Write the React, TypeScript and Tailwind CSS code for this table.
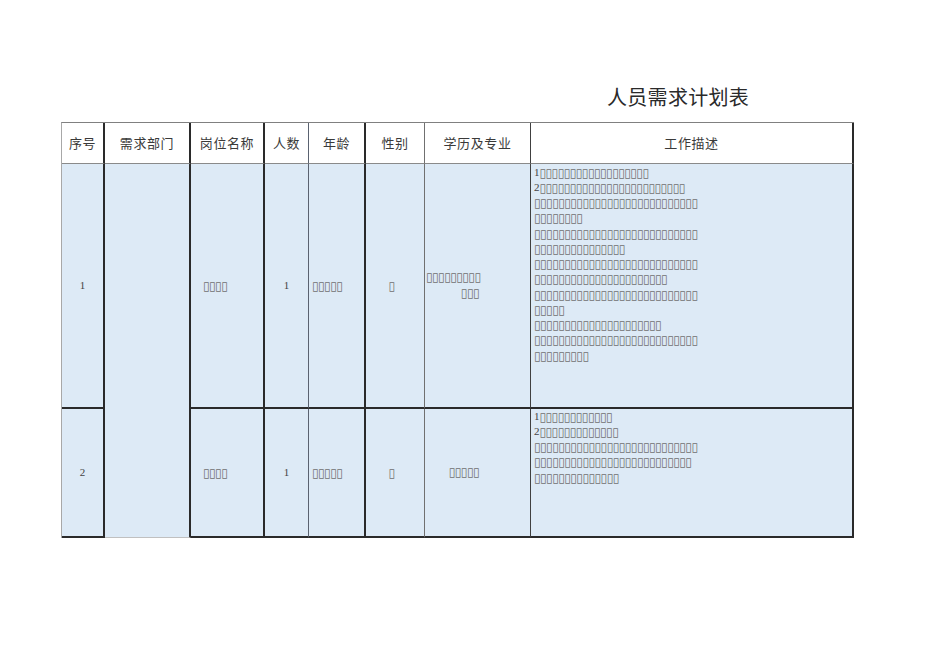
import React from "react";

const B = (n: number) => "▯".repeat(n);

const T = "font-['DejaVu_Sans',sans-serif] text-[12px] tracking-[-0.55px] text-[#707070]";
const NUM = "font-['Liberation_Serif',serif] text-[11px] text-[#444]";

function Lines({ lines }: { lines: [string, number][] }) {
  return (
    <div className="text-[11px] whitespace-pre">
      {lines.map(([p, n], i) => (
        <div key={i} className="h-[15.25px] leading-[15.25px] flex items-center">
          {p && <span className={`${NUM} leading-none`}>{p}</span>}
          <span className={`${T} leading-none`}>{B(n)}</span>
        </div>
      ))}
    </div>
  );
}

const BLACK = "border-r-2 border-r-[#2a2a2a]";
const colBorder = [
  BLACK,
  BLACK,
  BLACK,
  "border-r border-r-[#5a6270]",
  BLACK,
  "border-r border-r-[#707070]",
  "border-r border-r-[#404040]",
  BLACK,
];
const headers = ["序号", "需求部门", "岗位名称", "人数", "年龄", "性别", "学历及专业", "工作描述"];
const CELL = "bg-[#ddeaf6] border-b-2 border-b-[#2a2a2a]";

function Cells({ edu, desc, shift }: { edu: number[]; desc: [string, number][]; shift: string }) {
  return (
    <>
      <div className={`${CELL} ${colBorder[2]} flex items-center pl-[12px] text-[11px]`}>
        <span className={`${T} leading-none`}>{B(4)}</span>
      </div>
      <div className={`${CELL} ${colBorder[3]} flex items-center justify-center ${NUM}`}>1</div>
      <div className={`${CELL} ${colBorder[4]} flex items-center pl-[3px] text-[11px]`}>
        <span className={`${T} leading-none`}>{B(5)}</span>
      </div>
      <div className={`${CELL} ${colBorder[5]} flex items-center justify-center pr-[7px] text-[11px]`}>
        <span className={`${T} leading-none`}>{B(1)}</span>
      </div>
      <div className={`${CELL} ${colBorder[6]} flex items-center pl-[1px]`}>
        <div className="w-[53px] text-right text-[11px] whitespace-nowrap">
          {edu.map((c, i) => (
            <div key={i} className={`${T} h-[15.25px] leading-[15.25px]`}>
              {B(c)}
            </div>
          ))}
        </div>
      </div>
      <div className={`${CELL} ${colBorder[7]} pl-[3px] ${shift}`}>
        <Lines lines={desc} />
      </div>
    </>
  );
}

export default function App() {
  const row1Desc: [string, number][] = [
    ["1", 18],
    ["2", 24],
    ["", 27],
    ["", 8],
    ["", 27],
    ["", 15],
    ["", 27],
    ["", 22],
    ["", 27],
    ["", 5],
    ["", 21],
    ["", 27],
    ["", 9],
  ];
  const row2Desc: [string, number][] = [
    ["1", 12],
    ["2", 13],
    ["", 27],
    ["", 26],
    ["", 14],
  ];

  return (
    <div className="w-[950px] h-[672px] bg-white font-['Noto_Sans_CJK_SC',sans-serif]">
      <div className="pt-[85px] pl-[607px] text-[20px] leading-[24px] text-[#2a2a2a] tracking-[0.3px]">
        人员需求计划表
      </div>
      <div className="mt-[13px] ml-[61px] w-[793px] border-l border-l-[#a8a8a8] border-t border-t-[#808080] grid grid-cols-[43px_86px_74px_44px_57px_59px_106px_323px] grid-rows-[41px_245px_129px]">
        {headers.map((h, i) => (
          <div
            key={h}
            className={`flex items-center justify-center bg-white text-[13px] tracking-[0.6px] text-[#3a3a3a] border-b border-b-[#8a8a8a] ${colBorder[i]}`}
          >
            {h}
          </div>
        ))}
        <div className={`${CELL} ${colBorder[0]} flex items-center justify-center ${NUM}`}>1</div>
        <div className={`bg-[#ddeaf6] ${colBorder[1]} row-span-2 border-b border-b-[#c0c0c0]`}></div>
        <Cells edu={[9, 3]} desc={row1Desc} shift="pt-[1px]" />
        <div className={`${CELL} ${colBorder[0]} flex items-center justify-center ${NUM}`}>2</div>
        <Cells edu={[5]} desc={row2Desc} shift="" />
      </div>
    </div>
  );
}
